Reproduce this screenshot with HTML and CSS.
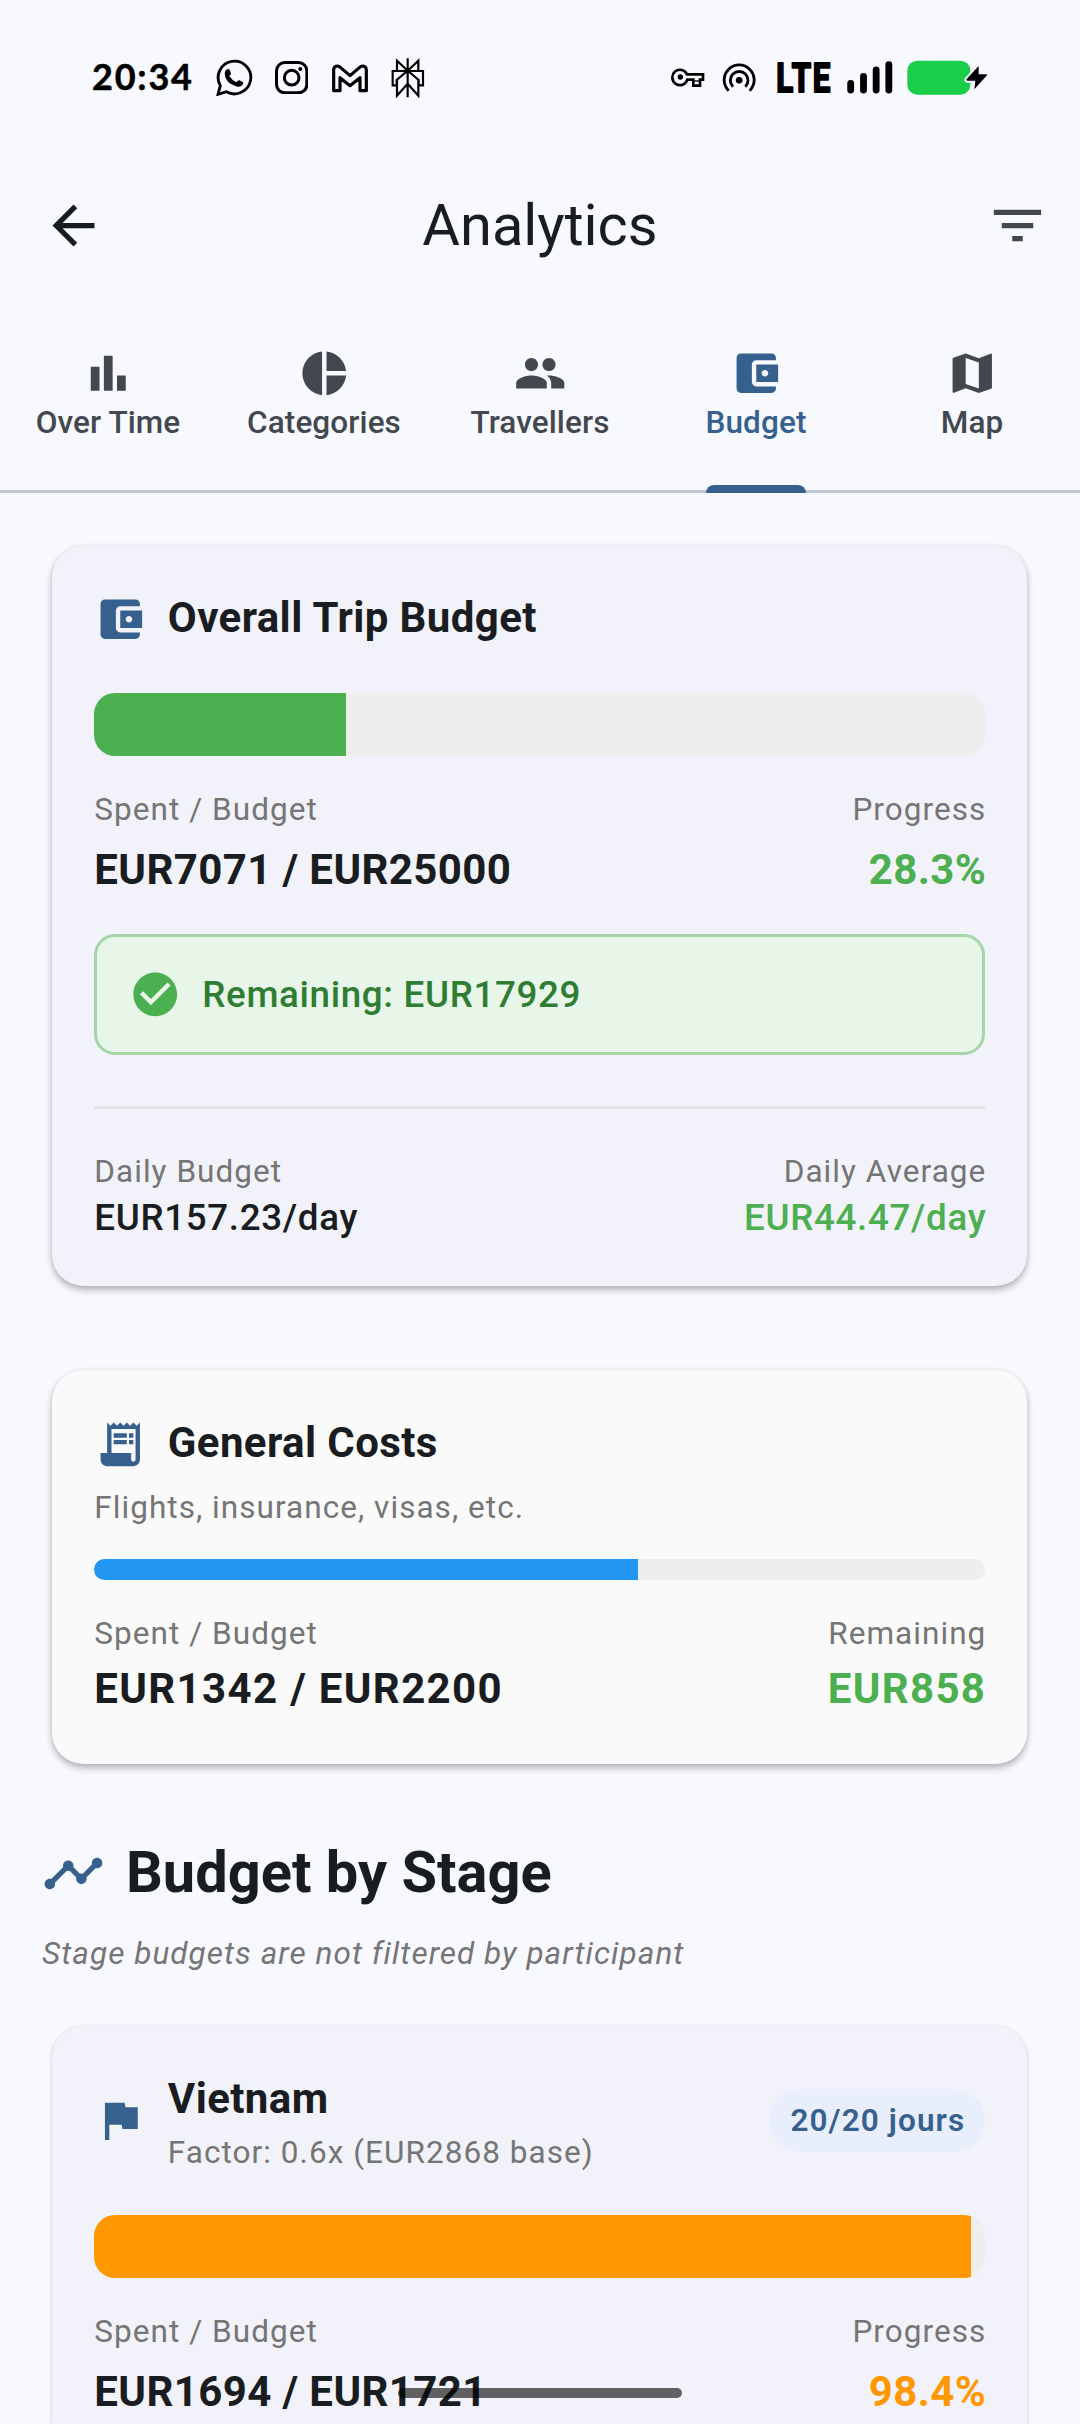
FILE: index.html
```html
<!DOCTYPE html>
<html lang="en">

<head>
  <meta charset="UTF-8">
  <title>Analytics</title>
  <link rel="stylesheet" href="styles.css">
</head>

<body>

  <!-- Status bar -->
  <div class="statusbar">
    <svg class="clock" width="104" height="60" viewBox="0 0 104 60">
      <text x="1" y="41.5" textLength="100" lengthAdjust="spacing">20:34</text>
    </svg>
    <svg class="st-whatsapp" width="37" height="37" viewBox="467 58 111 111">
      <path d="M473 164l7-26a49 49 0 1 1 18 18z" fill="none" stroke="#000" stroke-width="8.500" stroke-linejoin="miter" />
      <path d="M500 89q7-3 9 4l3 9q0 3-5 7 8 13 21 19 5-7 9-6l11 6q2 2-1 7-6 8-17 6-36-10-37-40 1-9 7-12z" />
    </svg>
    <svg class="st-instagram" width="33" height="33" viewBox="646 64 99 99">
      <rect x="650.5" y="68.500" width="91" height="91" rx="25" fill="none" stroke="#000" stroke-width="9" />
      <circle cx="696" cy="114" r="22" fill="none" stroke="#000" stroke-width="9" />
      <circle cx="722" cy="88" r="6" />
    </svg>
    <svg class="st-gmail" width="36" height="30" viewBox="816 66 108 90">
      <path d="M821 149V85q1-10 12-10 4 0 8 4l29 25 29-25q4-4 8-4 11 0 12 10v64h-19v-39l-30 24-30-24v39z" fill="none" stroke="#000" stroke-width="9.500" stroke-linejoin="round" />
    </svg>
    <svg class="st-perplexity" width="34" height="40" viewBox="994 53 102 120">
      <g fill="none" stroke="#000" stroke-width="6.500">
        <path d="M1044 54v117M1044 91l-32-30v30M1044 91l32-30v30M999 92h91v43h-13v-16l-33-28-33 28v16h-12zM1044 130l-32 36v-47M1044 130l32 36v-47" />
      </g>
    </svg>
    <svg class="st-key" width="34" height="22" viewBox="92 82 102 66">
      <path d="M140 104h48v16h-9v18h-20v-18h-18a23 23 0 1 1-1-16z" fill="none" stroke="#000" stroke-width="8" stroke-linejoin="miter" />
      <circle cx="120" cy="112" r="8" />
      <path d="M162 124h14" stroke="#000" stroke-width="4" />
    </svg>
    <svg class="st-hotspot" width="34" height="29" viewBox="247 66 102 87">
      <g fill="none" stroke="#000" stroke-width="8.500">
        <path d="M267 149a45 45 0 1 1 63 0" />
        <path d="M280 137a26.500 26.500 0 1 1 37 0" />
      </g>
      <circle cx="298.500" cy="118" r="10" />
    </svg>
    <svg class="network" width="58" height="60" viewBox="0 0 58 60">
      <text x="0.5" y="44" transform="scale(0.76 1)">LTE</text>
    </svg>
    <svg class="st-signal" width="46" height="33" viewBox="620 62 138 99">
      <path d="M631 129v20M669.500 108v41M707.500 89v60M745.500 73v76" stroke="#000" stroke-width="20.500" stroke-linecap="round" />
    </svg>
    <svg class="st-battery" width="82" height="36" viewBox="803 58 246 108">
      <rect x="804" y="60" width="189" height="102" rx="30" fill="#1bce49" />
      <path d="M1018 76l-36 39q-3 5 3 5h23l-3 26 38-42q1-3-3-3h-22z" fill="#000" stroke="#f8f9ff" stroke-width="12" stroke-linejoin="round" paint-order="stroke" />
    </svg>
  </div>

  <!-- App bar -->
  <div class="appbar">
    <svg class="icon-lg back" viewBox="0 0 24 24"><path d="M20 11H7.830l5.590-5.590L12 4l-8 8 8 8 1.410-1.410L7.830 13H20v-2z" /></svg>
    <h1>Analytics</h1>
    <svg class="icon-lg filter" viewBox="0 0 24 24"><path d="M10 18h4v-2h-4v2zM3 6v2h18V6H3zm3 7h12v-2H6v2z" /></svg>
  </div>

  <!-- Tabs -->
  <div class="tabs">
    <div class="tab">
      <svg class="icon" viewBox="0 0 24 24"><path d="M4 9h4v11H4zm12 4h4v7h-4zm-6-9h4v16h-4z" /></svg>
      <span>Over Time</span>
    </div>
    <div class="tab">
      <svg class="icon" viewBox="0 0 24 24"><path d="M11 2v20c-5.070-.5-9-4.790-9-10s3.930-9.500 9-10zm2.030 0v8.990H22c-.47-4.740-4.240-8.520-8.970-8.990zm0 11.010V22c4.740-.47 8.500-4.250 8.970-8.990h-8.970z" /></svg>
      <span>Categories</span>
    </div>
    <div class="tab">
      <svg class="icon" viewBox="0 0 24 24"><path d="M16 11c1.660 0 2.990-1.340 2.990-3S17.660 5 16 5s-3 1.340-3 3 1.340 3 3 3zm-8 0c1.660 0 2.990-1.340 2.990-3S9.660 5 8 5 5 6.340 5 8s1.340 3 3 3zm0 2c-2.330 0-7 1.170-7 3.500V19h14v-2.500c0-2.330-4.670-3.500-7-3.500zm8 0c-.29 0-.62.020-.97.050 1.160.84 1.970 1.970 1.970 3.450V19h6v-2.500c0-2.330-4.670-3.500-7-3.500z" /></svg>
      <span>Travellers</span>
    </div>
    <div class="tab active">
      <svg class="icon" viewBox="0 0 24 24"><path d="M21 18v1c0 1.100-.9 2-2 2H5c-1.110 0-2-.9-2-2V5c0-1.100.89-2 2-2h14c1.100 0 2 .9 2 2v1h-9c-1.110 0-2 .9-2 2v8c0 1.100.89 2 2 2h9zm-9-2h10V8H12v8zm4-2.500c-.83 0-1.500-.67-1.500-1.500s.67-1.500 1.500-1.500 1.500.67 1.500 1.500-.67 1.500-1.500 1.500z" /></svg>
      <span>Budget</span>
    </div>
    <div class="tab">
      <svg class="icon" viewBox="0 0 24 24"><path d="M20.500 3l-.16.030L15 5.100 9 3 3.360 4.900c-.21.070-.36.250-.36.480V20.500c0 .28.22.5.5.5l.16-.030L9 18.900l6 2.100 5.640-1.900c.21-.070.36-.25.36-.48V3.500c0-.28-.22-.5-.5-.5zM15 19l-6-2.110V5l6 2.110V19z" /></svg>
      <span>Map</span>
    </div>
  </div>

  <div class="content">

    <!-- Overall budget -->
    <div class="card">
      <div class="card-title">
        <svg class="icon" viewBox="0 0 24 24"><path d="M21 18v1c0 1.100-.9 2-2 2H5c-1.110 0-2-.9-2-2V5c0-1.100.89-2 2-2h14c1.100 0 2 .9 2 2v1h-9c-1.110 0-2 .9-2 2v8c0 1.100.89 2 2 2h9zm-9-2h10V8H12v8zm4-2.500c-.83 0-1.500-.67-1.500-1.500s.67-1.500 1.500-1.500 1.500.67 1.500 1.500-.67 1.500-1.500 1.500z" /></svg>
        <h2>Overall Trip Budget</h2>
      </div>
      <div class="progress">
        <div class="fill green-bg" style="width: 28.284%"></div>
      </div>
      <div class="row labels">
        <span>Spent / Budget</span>
        <span>Progress</span>
      </div>
      <div class="row amounts">
        <span>EUR7071 / EUR25000</span>
        <span class="green">28.3%</span>
      </div>
      <div class="remaining">
        <svg class="icon" viewBox="0 0 24 24"><path d="M12 2C6.480 2 2 6.480 2 12s4.480 10 10 10 10-4.480 10-10S17.520 2 12 2zm-2 15l-5-5 1.410-1.410L10 14.170l7.590-7.590L19 8l-9 9z" /></svg>
        <span>Remaining: EUR17929</span>
      </div>
      <div class="divider"></div>
      <div class="row labels daily">
        <span>Daily Budget</span>
        <span>Daily Average</span>
      </div>
      <div class="row daily-amounts">
        <span>EUR157.23/day</span>
        <span class="green">EUR44.47/day</span>
      </div>
    </div>

    <!-- General costs -->
    <div class="card general">
      <div class="card-title">
        <svg class="icon" viewBox="0 0 24 24"><path d="M19.500 3.500L18 2l-1.500 1.500L15 2l-1.500 1.500L12 2l-1.500 1.500L9 2 7.500 3.500 6 2v14H3v3c0 1.660 1.340 3 3 3h12c1.660 0 3-1.340 3-3V2l-1.500 1.500zM19 19c0 .55-.45 1-1 1s-1-.45-1-1v-3H8V5h11v14zM9 7h6v2H9zM16 7h2v2h-2zM9 10h6v2H9zM16 10h2v2h-2z" /></svg>
        <h2>General Costs</h2>
      </div>
      <p class="caption">Flights, insurance, visas, etc.</p>
      <div class="progress thin">
        <div class="fill blue-bg" style="width: 61%"></div>
      </div>
      <div class="row labels">
        <span>Spent / Budget</span>
        <span>Remaining</span>
      </div>
      <div class="row amounts wide">
        <span>EUR1342 / EUR2200</span>
        <span class="green">EUR858</span>
      </div>
    </div>

    <!-- Stages -->
    <div class="section-title">
      <svg class="icon-lg" viewBox="0 0 24 24"><path d="M23 8c0 1.100-.9 2-2 2-.18 0-.35-.020-.51-.070l-3.560 3.550c.050.16.070.34.070.52 0 1.100-.9 2-2 2s-2-.9-2-2c0-.18.020-.36.070-.52l-2.550-2.550c-.16.050-.34.070-.52.070s-.36-.020-.52-.070l-4.550 4.560c.050.16.070.33.070.51 0 1.100-.9 2-2 2s-2-.9-2-2 .9-2 2-2c.18 0 .35.020.51.070l4.560-4.550C8.020 9.360 8 9.180 8 9c0-1.100.9-2 2-2s2 .9 2 2c0 .18-.020.36-.070.52l2.550 2.550c.16-.050.34-.070.52-.070s.36.020.52.070l3.550-3.560C19.020 8.350 19 8.180 19 8c0-1.100.9-2 2-2s2 .9 2 2z" /></svg>
      <h2>Budget by Stage</h2>
    </div>
    <p class="note">Stage budgets are not filtered by participant</p>

    <div class="card stage">
      <div class="stage-head">
        <svg class="icon" viewBox="0 0 24 24"><path d="M14.400 6L14 4H5v17h2v-7h5.600l.4 2h7V6z" /></svg>
        <div class="stage-name">
          <h2>Vietnam</h2>
          <p>Factor: 0.6x (EUR2868 base)</p>
        </div>
        <span class="days">20/20 jours</span>
      </div>
      <div class="progress">
        <div class="fill orange-bg" style="width: 98.4%"></div>
      </div>
      <div class="row labels">
        <span>Spent / Budget</span>
        <span>Progress</span>
      </div>
      <div class="row amounts">
        <span>EUR1694 / EUR1721</span>
        <span class="orange">98.4%</span>
      </div>
    </div>

  </div>

  <!-- Gesture handle, over the page -->
  <div class="handle"></div>

</body>

</html>
```

FILE: styles.css
```css
* {
  box-sizing: border-box;
  margin: 0;
  padding: 0;
}

body {
  width: 1080px;
  height: 2424px;
  overflow: hidden;
  position: relative;
  background: #f8f9ff;
  color: #191c20;
  font-family: Roboto, "Liberation Sans", sans-serif;
}

svg {
  display: block;
  flex: none;
}

.icon {
  width: 52.5px;
  height: 52.5px;
  fill: #36618e;
}

.icon-lg {
  width: 63px;
  height: 63px;
  fill: #36618e;
}

/* Status bar */
.statusbar {
  display: flex;
  align-items: center;
  height: 155px;
  padding-left: 91px;
}

.clock text {
  font: 700 36px Lato, sans-serif;
  stroke: #000;
  stroke-width: 0.5px;
  stroke-linejoin: round;
}

.network text {
  font: 700 41px Roboto, sans-serif;
  letter-spacing: 2.5px;
  stroke: #000;
  stroke-width: 2.2px;
  stroke-linejoin: round;
}

.st-whatsapp {
  margin-left: 21px;
}

.st-instagram {
  margin-left: 22px;
}

.st-gmail {
  margin-left: 24px;
}

.st-perplexity {
  margin-left: 23px;
}

.st-key {
  margin-left: 246px;
}

.st-hotspot {
  margin-left: 17px;
}

.network {
  margin-left: 20px;
}

.st-signal {
  margin-left: 13px;
}

.st-battery {
  margin-left: 14px;
}

/* App bar */
.appbar {
  display: flex;
  align-items: center;
  height: 141px;
  padding: 0 31.5px 0 42px;
}

.appbar h1 {
  flex: 1;
  padding-right: 10.5px;
  text-align: center;
  font-size: 57.75px;
  font-weight: 400;
  line-height: 73.5px;
}

.back {
  fill: #191c20;
}

.filter {
  fill: #43474e;
}

/* Tabs */
.tabs {
  display: flex;
  height: 197px;
  border-bottom: 3px solid #c3c6cf;
}

.tab {
  display: flex;
  flex-direction: column;
  align-items: center;
  width: 216px;
  height: 197px;
  padding-top: 50.5px;
  color: #43474e;
  font-size: 31.5px;
  font-weight: 500;
  line-height: 42px;
  letter-spacing: 0.1px;
}

.tab .icon {
  fill: #43474e;
  margin-bottom: 2.5px;
}

.tab.active {
  color: #36618e;
}

.tab.active .icon {
  fill: #36618e;
}

.tab.active::after {
  content: "";
  width: 100px;
  height: 8px;
  margin-top: auto;
  border-radius: 8px 8px 0 0;
  background: #36618e;
}

/* Cards */
.content {
  padding: 52.5px 42px 0;
}

.card {
  margin: 0 10.7px 0 10.3px;
  padding: 42px;
  border-radius: 31.5px;
  background: #f2f2fa;
  box-shadow: 0 4px 7px rgba(0, 0, 0, 0.28), 0 0 5px rgba(0, 0, 0, 0.05);
}

.general {
  margin-top: 84px;
  background: #fafafa;
}

.card-title {
  display: flex;
  align-items: center;
  height: 63px;
}

.card h2 {
  font-size: 42px;
  font-weight: 700;
  line-height: 61px;
  letter-spacing: 0.4px;
}

.card-title h2 {
  margin-left: 21px;
  padding-bottom: 3px;
}

.progress {
  height: 63px;
  margin-top: 42px;
  border-radius: 21px;
  background: #eeeeee;
  overflow: hidden;
}

.progress.thin {
  height: 21px;
  margin-top: 31.5px;
  border-radius: 10.5px;
}

.fill {
  height: 100%;
}

.green-bg {
  background: #4caf50;
}

.blue-bg {
  background: #2196f3;
}

.orange-bg {
  background: #ff9800;
}

.green {
  color: #4caf50;
}

.orange {
  color: #ff9800;
}

.row {
  display: flex;
  justify-content: space-between;
  margin-right: -1px;
}

.labels,
.caption,
.note,
.stage-name p {
  padding-top: 1px;
  color: #757575;
  font-size: 31.5px;
  line-height: 41px;
  letter-spacing: 1.05px;
}

.labels {
  margin-top: 32px;
}

.amounts {
  margin-top: 10px;
  padding-bottom: 3px;
  font-size: 42px;
  font-weight: 700;
  line-height: 60px;
  letter-spacing: 0.4px;
}

.amounts.wide {
  margin-top: 5px;
  letter-spacing: 1.35px;
}

.remaining {
  display: flex;
  align-items: center;
  height: 120.75px;
  margin-top: 31.5px;
  padding: 0 31.5px;
  border: 3px solid #a5d6a7;
  border-radius: 21px;
  background: #e8f5e9;
  color: #2e7d32;
  font-size: 36.75px;
  font-weight: 500;
  letter-spacing: 0.66px;
}

.remaining .icon {
  margin-right: 21px;
  fill: #4caf50;
}

.divider {
  height: 3px;
  margin-top: 51.5px;
  background: #e3e3e5;
}

.labels.daily {
  margin-top: 40.5px;
}

.daily-amounts {
  font-size: 36.75px;
  font-weight: 500;
  line-height: 52.5px;
  letter-spacing: 0.66px;
}

.caption {
  margin-top: 10.5px;
}

/* Stages */
.section-title {
  display: flex;
  align-items: center;
  margin-top: 72px;
}

.section-title h2 {
  margin-left: 21px;
  font-size: 57.75px;
  font-weight: 700;
  line-height: 73.5px;
}

.note {
  margin-top: 22.5px;
  font-style: italic;
}

.stage {
  height: 399px;
  margin-top: 51.5px;
  padding-bottom: 0;
  border-radius: 31.5px 31.5px 0 0;
  box-shadow: 0 2px 4px rgba(0, 0, 0, 0.16), 0 0 4px rgba(0, 0, 0, 0.06);
}

.stage-head {
  display: flex;
  align-items: center;
}

.stage-name {
  flex: 1;
  margin-left: 21px;
}

.stage-name h2 {
  margin-bottom: 2px;
}

.days {
  height: 63px;
  padding: 0 20px 0 21px;
  border-radius: 31.5px;
  background: #e8eefb;
  color: #36618e;
  font-size: 31.5px;
  font-weight: 600;
  line-height: 63px;
  letter-spacing: 1.1px;
}

.handle {
  position: absolute;
  left: 398px;
  top: 2388px;
  width: 284px;
  height: 10px;
  border-radius: 5px;
  background: rgba(0, 0, 0, 0.6);
}
```
